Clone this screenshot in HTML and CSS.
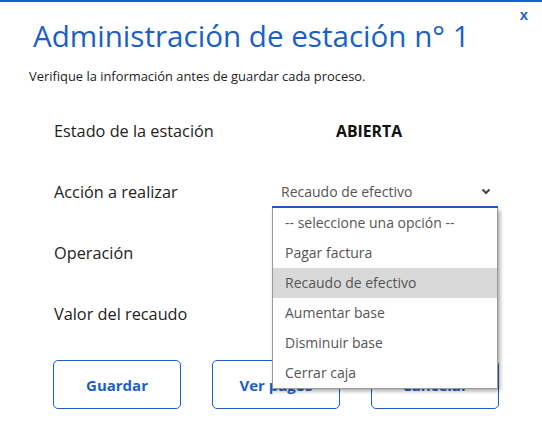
FILE: index.html
```html
<!DOCTYPE html>
<html lang="es">
<head>
<meta charset="utf-8">
<title>Administración de estación</title>
<link rel="stylesheet" href="styles.css">
</head>
<body>
<div class="modal">
  <button class="close">x</button>
  <h1 class="title">Administración de estación n° 1</h1>
  <p class="subtitle">Verifique la información antes de guardar cada proceso.</p>
  <div class="form">
    <div class="row">
      <span class="label">Estado de la estación</span>
      <span class="status">ABIERTA</span>
    </div>
    <div class="row">
      <span class="label">Acción a realizar</span>
      <div class="select">
        <div class="select-value">
          <span>Recaudo de efectivo</span>
          <svg class="chevron" width="10" height="7" viewBox="0 0 10 7"><path d="M1.5 1.5 L5 5 L8.5 1.5" fill="none" stroke="#444" stroke-width="2"/></svg>
        </div>
        <ul class="options">
          <li>-- seleccione una opción --</li>
          <li>Pagar factura</li>
          <li class="active">Recaudo de efectivo</li>
          <li>Aumentar base</li>
          <li>Disminuir base</li>
          <li>Cerrar caja</li>
        </ul>
      </div>
    </div>
    <div class="row">
      <span class="label">Operación</span>
    </div>
    <div class="row">
      <span class="label">Valor del recaudo</span>
    </div>
  </div>
  <div class="actions">
    <button class="btn">Guardar</button>
    <button class="btn">Ver pagos</button>
    <button class="btn">Cancelar</button>
  </div>
</div>
</body>
</html>
```

FILE: styles.css
```css
* { box-sizing: border-box; }
html, body { margin: 0; padding: 0; background: #fff; }
body {
  font-family: "Open Sans", "Noto Sans", sans-serif;
  color: #222;
  border-top: 2px solid #1a5fc8;
  height: 437px;
  overflow: hidden;
}
.modal {
  position: relative;
  padding: 15px 0 0 0;
}
.close {
  position: absolute;
  top: 5px;
  right: 14px;
  border: none;
  background: none;
  color: #1a5fc8;
  font-family: "Liberation Sans", sans-serif;
  font-weight: bold;
  font-size: 15px;
  padding: 0;
  line-height: 16px;
}
.title {
  margin: 0 0 0 33px;
  font-weight: normal;
  font-size: 29.6px;
  line-height: 38px;
  color: #1a5fc8;
}
.subtitle {
  margin: 13px 0 0 29px;
  font-size: 12.9px;
  line-height: 16px;
  color: #222;
}
.form {
  margin-top: 16px;
  padding-left: 54px;
}
.row {
  display: grid;
  grid-template-columns: 218px 226px;
  align-items: center;
  height: 61px;
  font-size: 16.3px;
}
.label { color: #222; }
.status {
  font-weight: bold;
  padding-left: 64px;
  font-size: 15.8px;
  color: #111;
}
.select { position: relative; }
.select-value {
  display: flex;
  justify-content: space-between;
  align-items: center;
  padding: 6px 7px 4px 9px;
  border-bottom: 2px solid #1a5fc8;
  color: #555;
  font-size: 14px;
  line-height: 20px;
}
.options {
  position: absolute;
  left: 0;
  right: 0;
  top: 100%;
  margin: 0;
  padding: 0;
  list-style: none;
  background: #fff;
  border: 1px solid #9a9a9a;
  border-top: none;
  box-shadow: 2px 2px 4px rgba(0,0,0,0.35);
  z-index: 2;
}
.options li {
  height: 30px;
  line-height: 30px;
  padding-left: 12px;
  font-size: 14px;
  color: #555;
}
.options li.active { background: #d9d9d9; }
.actions {
  display: flex;
  gap: 31px;
  padding-left: 53px;
  margin-top: 16px;
}
.btn {
  width: 128px;
  height: 49px;
  border: 1px solid #1a5fc8;
  border-radius: 5px;
  background: #fff;
  color: #1a5fc8;
  font-family: "Open Sans", "Noto Sans", sans-serif;
  font-weight: bold;
  font-size: 15px;
}
```
